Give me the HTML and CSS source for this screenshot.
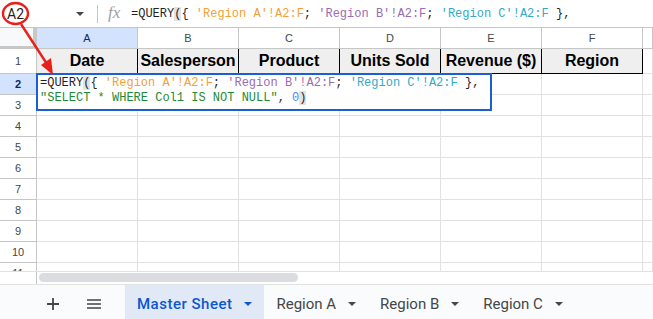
FILE: index.html
```html
<!DOCTYPE html>
<html>
<head>
<meta charset="utf-8">
<link rel="stylesheet" href="styles.css">
</head>
<body>
<div class="fbar">
  <div class="namebox"><span class="nm">A2</span><span class="caret"></span></div>
  <div class="sep"></div>
  <div class="fx">fx</div>
  <div class="ftext">=QUERY<span class="hl">(</span>{ <span class="ra">'Region A'!A2:F</span>; <span class="rb">'Region B'!A2:F</span>; <span class="rc">'Region C'!A2:F</span> },</div>
</div>

<div class="sheet">
  <div class="c corner"></div>
  <div class="c hd sel">A</div>
  <div class="c hd">B</div>
  <div class="c hd">C</div>
  <div class="c hd">D</div>
  <div class="c hd">E</div>
  <div class="c hd">F</div>
  <div class="c hd"></div>

  <div class="c rh">1</div>
  <div class="c h1">Date</div>
  <div class="c h1">Salesperson</div>
  <div class="c h1">Product</div>
  <div class="c h1">Units Sold</div>
  <div class="c h1">Revenue ($)</div>
  <div class="c h1">Region</div>
  <div class="c"></div>

  <div class="c rh sel">2</div><div class="c"></div><div class="c"></div><div class="c"></div><div class="c"></div><div class="c"></div><div class="c"></div><div class="c"></div>
  <div class="c rh">3</div><div class="c"></div><div class="c"></div><div class="c"></div><div class="c"></div><div class="c"></div><div class="c"></div><div class="c"></div>
  <div class="c rh">4</div><div class="c"></div><div class="c"></div><div class="c"></div><div class="c"></div><div class="c"></div><div class="c"></div><div class="c"></div>
  <div class="c rh">5</div><div class="c"></div><div class="c"></div><div class="c"></div><div class="c"></div><div class="c"></div><div class="c"></div><div class="c"></div>
  <div class="c rh">6</div><div class="c"></div><div class="c"></div><div class="c"></div><div class="c"></div><div class="c"></div><div class="c"></div><div class="c"></div>
  <div class="c rh">7</div><div class="c"></div><div class="c"></div><div class="c"></div><div class="c"></div><div class="c"></div><div class="c"></div><div class="c"></div>
  <div class="c rh">8</div><div class="c"></div><div class="c"></div><div class="c"></div><div class="c"></div><div class="c"></div><div class="c"></div><div class="c"></div>
  <div class="c rh">9</div><div class="c"></div><div class="c"></div><div class="c"></div><div class="c"></div><div class="c"></div><div class="c"></div><div class="c"></div>
  <div class="c rh">10</div><div class="c"></div><div class="c"></div><div class="c"></div><div class="c"></div><div class="c"></div><div class="c"></div><div class="c"></div>
  <div class="c rh">11</div><div class="c"></div><div class="c"></div><div class="c"></div><div class="c"></div><div class="c"></div><div class="c"></div><div class="c"></div>

  <div class="editor">=QUERY<span class="hl">(</span>{ <span class="ra">'Region A'!A2:F</span>; <span class="rb">'Region B'!A2:F</span>; <span class="rc">'Region C'!A2:F</span> },
<span class="str">"SELECT * WHERE Col1 IS NOT NULL"</span>, <span class="num">0</span><span class="hl">)</span></div>
</div>

<div class="hscroll">
  <div class="hs-left"></div>
  <div class="thumb"></div>
</div>

<div class="tabs">
  <div class="tb-icons">
    <svg class="ico" width="14" height="14" viewBox="0 0 14 14"><path d="M7 1v12M1 7h12" stroke="#444746" stroke-width="1.8" fill="none"/></svg>
    <svg class="ico" width="16" height="14" viewBox="0 0 16 14"><path d="M1 3h14M1 7h14M1 11h14" stroke="#444746" stroke-width="1.6" fill="none"/></svg>
  </div>
  <div class="tab active"><span class="tname">Master Sheet</span><span class="tcaret"></span></div>
  <div class="tab"><span class="tname">Region A</span><span class="tcaret"></span></div>
  <div class="tab"><span class="tname">Region B</span><span class="tcaret"></span></div>
  <div class="tab"><span class="tname">Region C</span><span class="tcaret"></span></div>
</div>

<svg class="annot" width="653" height="319" viewBox="0 0 653 319">
  <ellipse cx="15.5" cy="13.5" rx="12.5" ry="10.5" fill="none" stroke="#e8201c" stroke-width="2.4"/>
  <line x1="21" y1="24" x2="47" y2="64" stroke="#e8201c" stroke-width="2.4"/>
  <polygon points="53,75 41,65 51,58" fill="#e8201c"/>
</svg>
</body>
</html>
```

FILE: styles.css
```css
* { box-sizing: border-box; }

body {
  margin: 0;
  width: 653px;
  height: 319px;
  overflow: hidden;
  position: relative;
  background: #fff;
  font-family: Arial, "Liberation Sans", sans-serif;
  color: #000;
}

/* formula bar */
.fbar {
  height: 28px;
  border-bottom: 1px solid #c4c7c5;
  display: flex;
  align-items: center;
}
.namebox {
  width: 97px;
  display: flex;
  align-items: center;
  padding-left: 7px;
  padding-right: 13px;
  font-family: Roboto, "Liberation Sans", sans-serif;
  font-size: 14px;
  color: #1f1f1f;
}
.namebox .nm { flex: 1; }
.caret {
  width: 0;
  height: 0;
  border-left: 4.5px solid transparent;
  border-right: 4.5px solid transparent;
  border-top: 4.5px solid #444746;
}
.sep {
  width: 1px;
  height: 18px;
  background: #c4c7c5;
}
.fx {
  margin-left: 10px;
  width: 23px;
  font-family: "Liberation Serif", serif;
  font-style: italic;
  font-size: 17px;
  color: #a0a0a0;
  margin-top: -2px;
}
.ftext {
  font-family: "Liberation Mono", monospace;
  font-size: 12px;
  white-space: pre;
  color: #1f1f1f;
}

.hl { background: #e3e3e3; }
.ra { color: #f29f38; }
.rb { color: #9b6bb3; }
.rc { color: #33a9c7; }
.str { color: #1e8a36; }
.num { color: #4d86ea; }

/* grid */
.sheet {
  position: relative;
  height: 243px;
  overflow: hidden;
  display: grid;
  grid-template-columns: 37px repeat(6, 101px) 1fr;
  grid-template-rows: 21px 25px repeat(10, 21px);
}
.c {
  border-right: 1px solid #e1e1e1;
  border-bottom: 1px solid #e1e1e1;
}
.corner {
  background: #f8f9fa;
  border-right: 4px solid #c7c7c7;
  border-bottom: 3px solid #c7c7c7;
}
.hd {
  border-right-color: #c4c7c5;
  border-bottom-color: #c4c7c5;
  font-size: 11px;
  color: #444746;
  display: flex;
  align-items: center;
  justify-content: center;
}
.hd.sel {
  background: #d3e3fd;
  color: #0a2a66;
}
.rh {
  border-right-color: #c4c7c5;
  border-bottom-color: #c4c7c5;
  font-size: 11px;
  color: #444746;
  display: flex;
  align-items: center;
  justify-content: center;
}
.rh.sel {
  background: #d3e3fd;
  color: #0a2a66;
  font-weight: bold;
}
.h1 {
  background: #efefef;
  border-right-color: #000;
  border-bottom-color: #000;
  font-weight: bold;
  font-size: 16px;
  display: flex;
  align-items: center;
  justify-content: center;
  white-space: nowrap;
  overflow: hidden;
}

.editor {
  position: absolute;
  left: 36px;
  top: 45px;
  width: 456px;
  height: 38px;
  border: 2px solid #1a5fd8;
  background: #fff;
  padding: 1px 2px;
  font-family: "Liberation Mono", monospace;
  font-size: 12px;
  line-height: 15px;
  white-space: pre;
  color: #1f1f1f;
  z-index: 2;
}

/* horizontal scroll */
.hscroll {
  height: 13px;
  border-top: 1px solid #e1e1e1;
  display: flex;
}
.hs-left {
  width: 37px;
  border-right: 1px solid #c4c7c5;
}
.thumb {
  margin-left: 2px;
  margin-top: 1px;
  width: 259px;
  height: 9px;
  border-radius: 5px;
  background: #dadce0;
}

/* tabs */
.tabs {
  height: 35px;
  border-top: 1px solid #e1e3e1;
  background: #f9fbfd;
  display: flex;
  font-family: Roboto, "Liberation Sans", sans-serif;
  font-size: 15px;
  color: #444746;
}
.tb-icons {
  width: 125px;
  display: flex;
  align-items: center;
  padding-left: 46px;
  padding-top: 3px;
  gap: 26px;
}
.tab {
  display: flex;
  align-items: center;
  gap: 12px;
  padding: 3px 12px 0;
}
.tab.active {
  background: #e1e9f7;
  color: #0b57d0;
  font-weight: 500;
}
.tab.active .tname { letter-spacing: 0.5px; }
.tcaret {
  width: 0;
  height: 0;
  border-left: 4.5px solid transparent;
  border-right: 4.5px solid transparent;
  border-top: 4.5px solid currentColor;
}

.annot {
  position: absolute;
  left: 0;
  top: 0;
  pointer-events: none;
  z-index: 10;
}
```
